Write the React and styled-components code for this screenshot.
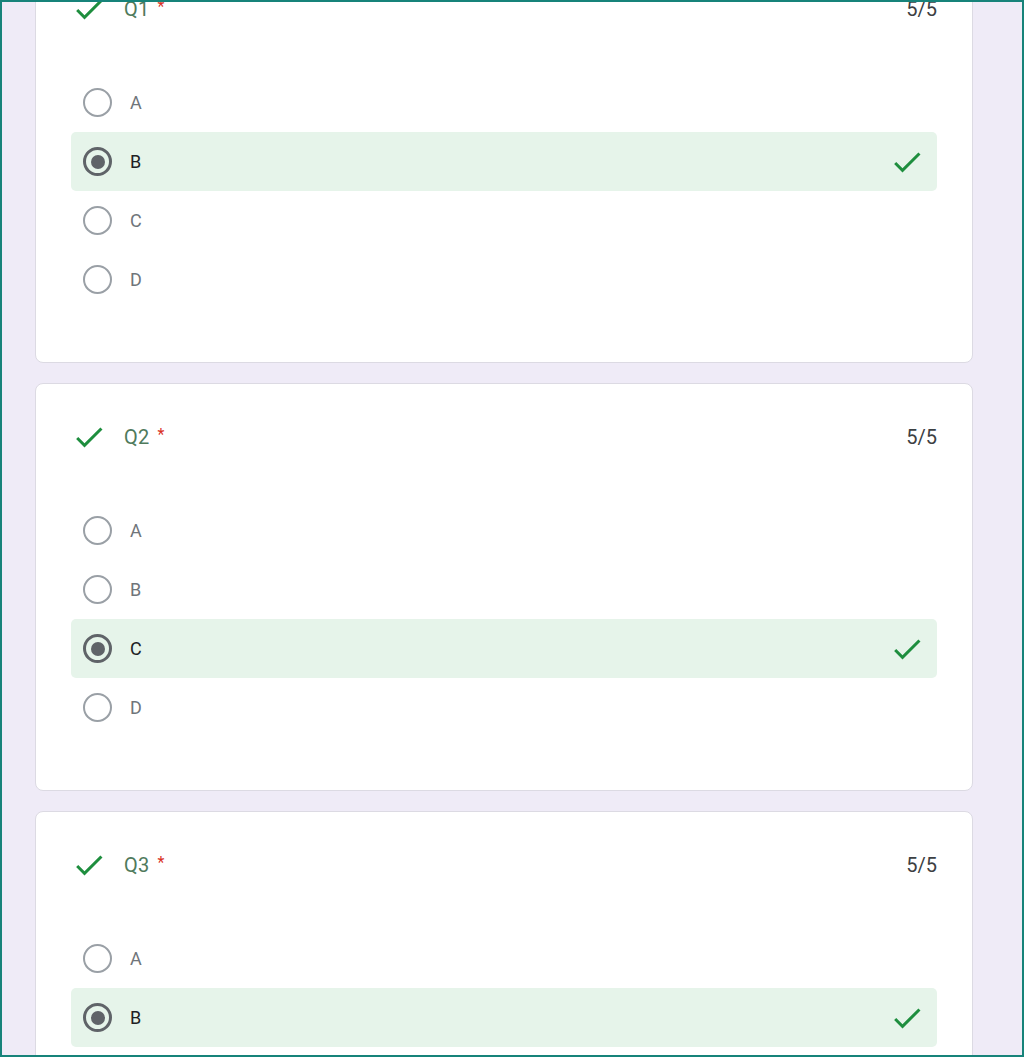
import styled, { createGlobalStyle } from 'styled-components';

const GlobalStyle = createGlobalStyle`
  html, body {
    margin: 0;
    padding: 0;
    background: #ffffff;
  }
  * {
    box-sizing: border-box;
  }
`;

const questions = [
  { id: 'Q1', score: '5/5', answer: 'B' },
  { id: 'Q2', score: '5/5', answer: 'C' },
  { id: 'Q3', score: '5/5', answer: 'B' },
];

const options = ['A', 'B', 'C', 'D'];

const CheckIcon = ({ size = 36 }) => (
  <svg width={size} height={size} viewBox='0 0 24 24' aria-hidden='true'>
    <path
      fill='#1e8e3e'
      d='M9 16.17L4.83 12l-1.42 1.41L9 19 21 7l-1.41-1.41z'
    />
  </svg>
);

const App = () => {
  return (
    <Frame>
      <GlobalStyle />
      <List>
        {questions.map((q) => (
          <Card key={q.id}>
            <Header>
              <Title>
                <CheckIcon />
                <QuestionName>
                  {q.id}
                  <Required>*</Required>
                </QuestionName>
              </Title>
              <Score>{q.score}</Score>
            </Header>
            <Options>
              {options.map((opt) => {
                const chosen = opt === q.answer;
                return (
                  <Option key={opt} $chosen={chosen}>
                    <Radio $chosen={chosen} />
                    <OptionLabel $chosen={chosen}>{opt}</OptionLabel>
                    {chosen && (
                      <RightMark>
                        <CheckIcon />
                      </RightMark>
                    )}
                  </Option>
                );
              })}
            </Options>
          </Card>
        ))}
      </List>
    </Frame>
  );
};

const Frame = styled.div`
  height: 1057px;
  width: 1024px;
  border: 2px solid #17837a;
  background: #efebf7;
  overflow: hidden;
  font-family: Roboto, 'Liberation Sans', Arial, sans-serif;
`;

const List = styled.div`
  display: flex;
  flex-direction: column;
  gap: 20px;
  margin-top: -47px;
  margin-left: 33px;
  width: 938px;
`;

const Card = styled.section`
  background: #ffffff;
  border: 1px solid #dcdae3;
  border-radius: 8px;
  padding: 35px 35px 53px 35px;
`;

const Header = styled.div`
  display: flex;
  align-items: center;
  justify-content: space-between;
  height: 36px;
  margin-bottom: 46px;
`;

const Title = styled.div`
  display: flex;
  align-items: center;
  gap: 17px;
`;

const QuestionName = styled.span`
  font-size: 20px;
  color: #4f7a5c;
  letter-spacing: 0.3px;
`;

const Required = styled.span`
  color: #d93025;
  font-size: 16px;
  margin-left: 8px;
  position: relative;
  top: -4px;
`;

const Score = styled.span`
  font-size: 20px;
  color: #3c4043;
  margin-right: 0;
`;

const Options = styled.div`
  display: flex;
  flex-direction: column;
`;

const Option = styled.div`
  display: flex;
  align-items: center;
  height: 59px;
  padding: 0 12px;
  border-radius: 5px;
  background: ${(p) => (p.$chosen ? '#e6f4ea' : 'transparent')};
`;

const Radio = styled.span`
  position: relative;
  width: 29px;
  height: 29px;
  border-radius: 50%;
  border: ${(p) => (p.$chosen ? '3px solid #5f6368' : '2.5px solid #9aa0a6')};
  flex-shrink: 0;
  &::after {
    content: '';
    display: ${(p) => (p.$chosen ? 'block' : 'none')};
    position: absolute;
    left: 50%;
    top: 50%;
    width: 14px;
    height: 14px;
    margin: -7px 0 0 -7px;
    border-radius: 50%;
    background: #5f6368;
  }
`;

const OptionLabel = styled.span`
  margin-left: 18px;
  font-size: 18px;
  color: ${(p) => (p.$chosen ? '#202124' : '#70757a')};
`;

const RightMark = styled.span`
  margin-left: auto;
  display: flex;
  align-items: center;
`;

export default App;
